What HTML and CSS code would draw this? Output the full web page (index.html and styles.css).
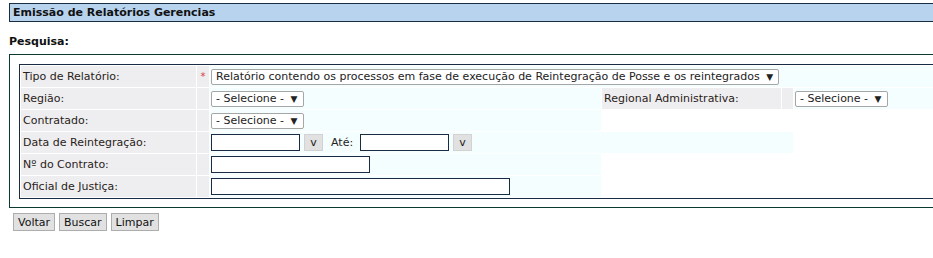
FILE: index.html
```html
<!DOCTYPE html>
<html lang="pt-BR">
<head>
    <meta charset="UTF-8">
    <title>Emissão de Relatórios Gerencias</title>
    <link rel="stylesheet" href="styles.css">
</head>
<body>
    <div class="pagina">
        <div class="titulo">Emissão de Relatórios Gerencias</div>

        <div class="subtitulo">Pesquisa:</div>

        <div class="quadro">
            <table class="filtros">
                <colgroup>
                    <col class="c-rotulo">
                    <col class="c-obrig">
                    <col class="c-valor">
                    <col class="c-rotulo2">
                    <col class="c-obrig2">
                    <col>
                </colgroup>
                <tr>
                    <td class="rotulo">Tipo de Relatório:</td>
                    <td class="obrig">*</td>
                    <td class="valor" colspan="4">
                        <span class="select">Relatório contendo os processos em fase de execução de Reintegração de Posse e os reintegrados <span class="seta">▼</span></span>
                    </td>
                </tr>
                <tr>
                    <td class="rotulo">Região:</td>
                    <td class="obrig"></td>
                    <td class="valor"><span class="select">- Selecione - <span class="seta">▼</span></span></td>
                    <td class="rotulo">Regional Administrativa:</td>
                    <td class="obrig"></td>
                    <td class="valor"><span class="select">- Selecione - <span class="seta">▼</span></span></td>
                </tr>
                <tr>
                    <td class="rotulo">Contratado:</td>
                    <td class="obrig"></td>
                    <td class="valor"><span class="select">- Selecione - <span class="seta">▼</span></span></td>
                </tr>
                <tr>
                    <td class="rotulo">Data de Reintegração:</td>
                    <td class="obrig"></td>
                    <td class="valor" colspan="3">
                        <span class="linha">
                            <input type="text" class="campo data">
                            <button class="btn-cal">v</button>
                            <span class="ate">Até:</span>
                            <input type="text" class="campo data">
                            <button class="btn-cal">v</button>
                        </span>
                    </td>
                </tr>
                <tr>
                    <td class="rotulo">Nº do Contrato:</td>
                    <td class="obrig"></td>
                    <td class="valor"><input type="text" class="campo contrato"></td>
                </tr>
                <tr>
                    <td class="rotulo">Oficial de Justiça:</td>
                    <td class="obrig"></td>
                    <td class="valor"><input type="text" class="campo oficial"></td>
                </tr>
            </table>
        </div>

        <div class="acoes">
            <button class="botao">Voltar</button>
            <button class="botao">Buscar</button>
            <button class="botao">Limpar</button>
        </div>
    </div>
</body>
</html>
```

FILE: styles.css
```css
* {
    margin: 0;
    padding: 0;
    box-sizing: border-box;
}

body {
    background: #fff;
    font-family: "DejaVu Sans", Verdana, sans-serif;
    font-size: 11px;
    color: #222;
    overflow: hidden;
}

.pagina {
    width: 1100px;
    padding: 3px 0 0 9px;
}

.titulo {
    background: #b8d3ee;
    border: 1px solid #1a2c44;
    font-weight: bold;
    color: #111;
    height: 19px;
    line-height: 17px;
    padding-left: 3px;
}

.subtitulo {
    font-weight: bold;
    color: #111;
    margin-top: 13px;
    line-height: 14px;
    margin-bottom: 5px;
}

.quadro {
    border: 1px solid #0e3a34;
    padding: 9px 0 8px 9px;
}

.filtros {
    width: 100%;
    border: 1px solid #1a2c44;
    border-spacing: 1px;
    background: #fff;
}

.c-rotulo { width: 175px; }
.c-obrig { width: 12px; }
.c-valor { width: 391px; }
.c-rotulo2 { width: 179px; }
.c-obrig2 { width: 11px; }

.filtros td {
    height: 21px;
    padding: 0 2px;
    vertical-align: middle;
    white-space: nowrap;
}

.rotulo {
    background: #eeeef0;
    color: #2a2218;
}

.obrig {
    background: #eeeef0;
    color: #d23c3c;
    font-size: 10px;
    text-align: center;
    vertical-align: top;
}

.filtros td.obrig {
    padding: 0;
}

.valor {
    background: #f5feff;
}

.filtros td.valor {
    padding-left: 1px;
}

.select {
    display: inline-block;
    background: #fff;
    border: 1px solid #a6a6a6;
    border-radius: 2px;
    height: 16px;
    line-height: 14px;
    padding: 0 5px 0 4px;
    color: #222;
    vertical-align: middle;
}

.seta {
    font-size: 9px;
    margin-left: 3px;
}

.linha {
    display: flex;
    align-items: center;
}

.campo {
    border: 1px solid #1a2c44;
    height: 17px;
    background: #fff;
    vertical-align: middle;
    font-family: inherit;
}

.data { width: 89px; }
.contrato { width: 159px; }
.oficial { width: 299px; }

.btn-cal {
    width: 19px;
    height: 17px;
    margin-left: 4px;
    background: #e1e1e1;
    border: 1px solid #d2d2d2;
    color: #222;
    font-family: inherit;
    font-size: 11px;
}

.ate {
    margin: 0 7px 0 8px;
}

.acoes {
    display: flex;
    gap: 4px;
    margin: 5px 0 0 4px;
}

.botao {
    background: #e1e1e1;
    border: 1px solid #adadad;
    height: 18px;
    padding: 0 4px;
    font-family: "DejaVu Sans", Verdana, sans-serif;
    font-size: 11px;
    color: #111;
}
```
